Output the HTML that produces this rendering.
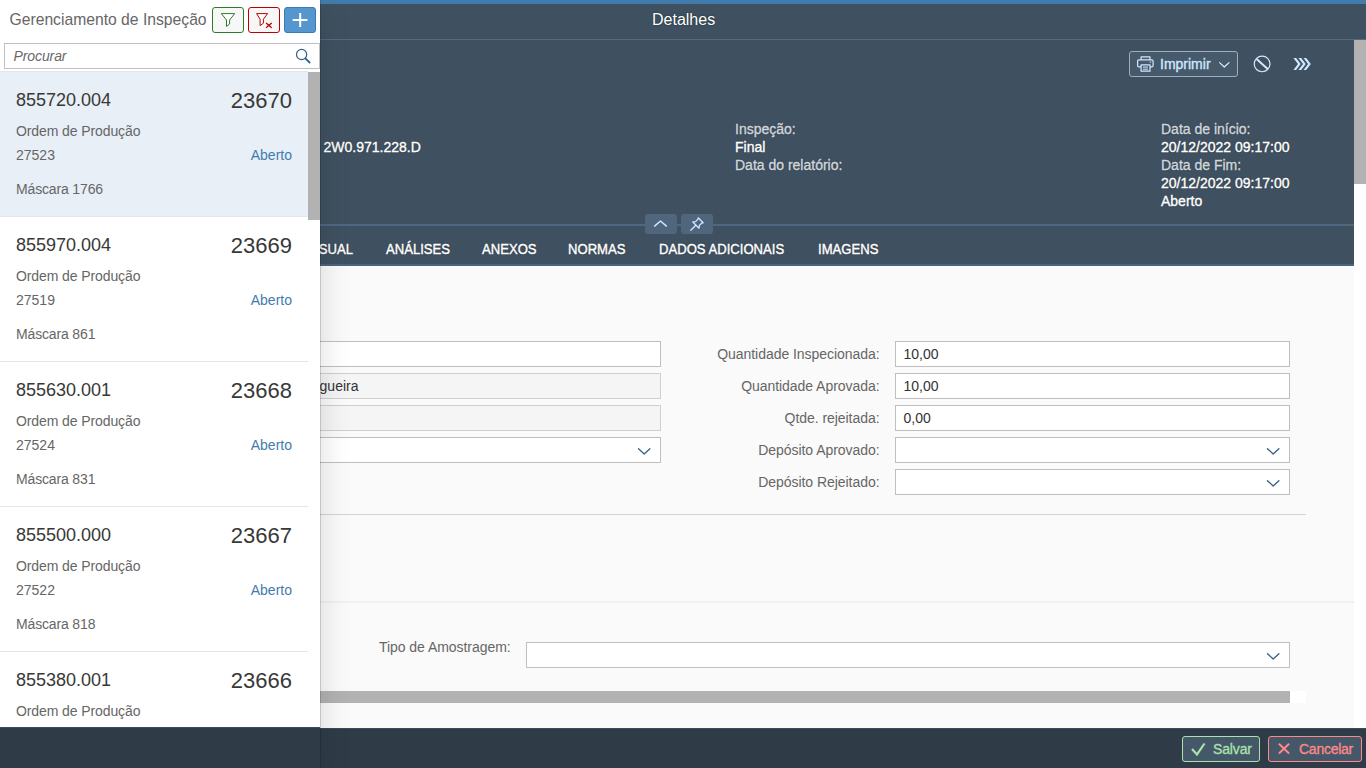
<!DOCTYPE html>
<html lang="pt-BR">
<head>
<meta charset="utf-8">
<title>Gerenciamento de Inspeção</title>
<style>
*{box-sizing:border-box;margin:0;padding:0}
html,body{width:1366px;height:768px;overflow:hidden;background:#fafafa}
body{font-family:"Liberation Sans",Arial,sans-serif;font-size:14px;color:#333;position:relative}
.t{position:absolute;white-space:nowrap;line-height:1}
svg{position:absolute;overflow:visible}

/* ---------- detail page ---------- */
#detail{position:absolute;left:0;top:0;width:1366px;height:768px;background:#fafafa;overflow:hidden}
#topbar{position:absolute;left:0;top:0;width:1366px;height:4px;background:#427cac}
#dhead{position:absolute;left:0;top:4px;width:1366px;height:36px;background:#3f5161;border-bottom:1px solid #536b80}
#ohead{position:absolute;left:0;top:40px;width:1354px;height:184px;background:#3f5161}
#oline{position:absolute;left:0;top:224px;width:1354px;height:2px;background:#4f6880}
#tabs{position:absolute;left:0;top:226px;width:1354px;height:38px;background:#3f5161}
#tabline{position:absolute;left:0;top:264px;width:1354px;height:2px;background:#4b637c}
#vtrack{position:absolute;left:1354px;top:40px;width:12px;height:688px;background:#fff}
#vthumb{position:absolute;left:1354px;top:40px;width:12px;height:144px;background:#b2b2b2}
.hl{color:#fff;font-size:14px;text-shadow:0 0 2px rgba(0,0,0,.4);-webkit-text-stroke:.35px #fff}
.hk{color:#d0d6dc;font-size:14px;text-shadow:0 0 2px rgba(0,0,0,.4);-webkit-text-stroke:.35px #d0d6dc}
.tab{color:#fff;font-size:14px;text-shadow:0 0 2px rgba(0,0,0,.4);top:242px;transform:scaleX(.935);transform-origin:0 0;-webkit-text-stroke:.4px #fff}
.tbtn{position:absolute;height:26px;border:1px solid #9bafc2;border-radius:3px;background:#465a6b}
.hbtn{position:absolute;top:214px;width:32px;height:20px;background:#4f667c;border-radius:3px}

/* form */
.inp{position:absolute;height:26px;border:1px solid #bfbfbf;background:#fff}
.inp.dis{background:#f5f5f5;border-color:#cfcfcf}
.lbl{color:#666;font-size:14px;letter-spacing:-.05px}
.val{color:#333;font-size:14px}
.hr{position:absolute;height:1px}

/* footer */
#foot{position:absolute;left:0;top:728px;width:1366px;height:40px;background:#2f3c48;box-shadow:inset 0 1px 0 #394b5c}
.fbtn{position:absolute;top:8px;height:26px;border-radius:3px;background:#44586a;border:1px solid}

/* ---------- master ---------- */
#master{position:absolute;left:0;top:0;width:320px;height:768px;background:#fff;box-shadow:0 0 0 1px rgba(0,0,0,.15),0 10px 30px 0 rgba(0,0,0,.15)}
#mfoot{position:absolute;left:0;top:727px;width:320px;height:41px;background:#2f3c48;border-top:1px solid #394b5c}
.mbtn{position:absolute;top:7px;width:32px;height:26px;border-radius:3px;border:1px solid;background:#f7f7f7}
#search{position:absolute;left:4px;top:43px;width:316px;height:26px;border:1px solid #bfbfbf;background:#fff}
#ltop{position:absolute;left:0;top:71px;width:308px;height:1px;background:#e5e5e5}
#mthumb{position:absolute;left:308px;top:72px;width:12px;height:148px;background:#b2b2b2}
.li{position:absolute;left:0;width:308px;height:145px;border-bottom:1px solid #e5e5e5}
.li.sel{background:#e8eff6}
.li .a{left:16px;top:19px;font-size:18px;color:#383838}
.li .n{right:16px;top:17.5px;font-size:22px;color:#383838}
.li .b{left:16px;top:52px;font-size:14px;letter-spacing:-.1px;color:#666}
.li .c{left:16px;top:76px;font-size:14px;color:#666}
.li .s{right:16px;top:76px;font-size:14px;color:#427cac}
.li .d{left:16px;top:109.5px;font-size:14px;letter-spacing:-.15px;color:#666}
</style>
</head>
<body>
<div id="detail">
  <div id="topbar"></div>
  <div id="dhead"><span class="t" id="dtitle" style="left:652px;top:8px;font-size:16px;color:#fff;text-shadow:0 0 2px rgba(0,0,0,.55)">Detalhes</span></div>
  <div id="ohead"></div>

  <!-- header toolbar -->
  <div class="tbtn" style="left:1129px;top:51px;width:109px"></div>
  <svg id="ic-print" style="left:1137px;top:56px" width="17" height="16" viewBox="0 0 17 16"><g fill="none" stroke="#d1e8ff" stroke-width="1.2" stroke-linejoin="round"><path d="M4.1 3.7V0.9h8.9v2.8"/><rect x="0.6" y="3.9" width="15.5" height="6.9" rx="1.3"/><rect x="4.1" y="8.9" width="8.9" height="6.3" fill="#465a6b"/><path d="M6 11.1h5M6 13.2h5" stroke-width="1"/><path d="M12.6 6.1h1.6" stroke-width="1"/></g></svg>
  <span class="t" id="tprint" style="left:1160px;top:57px;font-size:14px;color:#d1e8ff;-webkit-text-stroke:.35px #d1e8ff">Imprimir</span>
  <svg style="left:1219.2px;top:61.6px" width="10.6" height="6" viewBox="0 0 10.6 6"><path d="M0.6 0.6 L5.3 5 L10 0.6" fill="none" stroke="#d1e8ff" stroke-width="1.3" stroke-linecap="round" stroke-linejoin="round"/></svg>
  <svg id="ic-cancel" style="left:1253px;top:55px" width="18" height="18" viewBox="0 0 18 18"><g fill="none" stroke="#d1e8ff"><circle cx="9.1" cy="8.9" r="7.85" stroke-width="1.2"/><path d="M3.6 3.9 L14.7 14" stroke-width="2"/></g></svg>
  <svg id="ic-process" style="left:1293px;top:58px" width="18" height="12.1" viewBox="0 0 18 12.1"><g fill="#d1e8ff"><path d="M0.4 0h2.7l4.6 6.05-4.6 6.05h-2.7l4.6-6.05z"/><path d="M5.45 0h2.7l4.6 6.05-4.6 6.05h-2.7l4.6-6.05z"/><path d="M10.5 0h2.7l4.6 6.05-4.6 6.05h-2.7l4.6-6.05z"/></g></svg>

  <!-- header attributes -->
  <span class="t hl" style="left:323.5px;top:140px">2W0.971.228.D</span>
  <span class="t hk" style="left:735px;top:122px">Inspeção:</span>
  <span class="t hl" style="left:735px;top:140px">Final</span>
  <span class="t hk" style="left:735px;top:158px">Data do relatório:</span>
  <span class="t hk" style="left:1161px;top:122px">Data de início:</span>
  <span class="t hl" style="left:1161px;top:140px">20/12/2022 09:17:00</span>
  <span class="t hk" style="left:1161px;top:158px">Data de Fim:</span>
  <span class="t hl" style="left:1161px;top:176px">20/12/2022 09:17:00</span>
  <span class="t hl" style="left:1161px;top:194px">Aberto</span>

  <div id="oline"></div>
  <div id="tabs"></div>
  <span class="t tab" id="tab0" style="right:1012.7px;transform-origin:100% 0">INSPEÇÃO VISUAL</span>
  <span class="t tab" id="tab1" style="left:386px">ANÁLISES</span>
  <span class="t tab" id="tab2" style="left:482px">ANEXOS</span>
  <span class="t tab" id="tab3" style="left:568px">NORMAS</span>
  <span class="t tab" id="tab4" style="left:658.5px">DADOS ADICIONAIS</span>
  <span class="t tab" id="tab5" style="left:818px">IMAGENS</span>
  <div id="tabline"></div>
  <div class="hbtn" style="left:645px"></div>
  <div class="hbtn" style="left:681px"></div>
  <svg id="ic-up" style="left:654.4px;top:220.3px" width="13" height="7" viewBox="0 0 13 7"><path d="M0.6 6.1 L6.5 1 L12.4 6.1" fill="none" stroke="#d1e8ff" stroke-width="1.4" stroke-linecap="round" stroke-linejoin="round"/></svg>
  <svg id="ic-pin" style="left:690px;top:217px" width="14" height="14" viewBox="0 0 14 14"><g fill="none" stroke="#d1e8ff" stroke-width="1.3" stroke-linejoin="round" stroke-linecap="round"><path d="M8.2 0.8 L13.2 5.8 L11.6 6.2 L9.4 8.4 L9 11.2 L2.8 5 L5.6 4.6 L7.8 2.4 Z"/><path d="M5.8 8.2 L0.8 13.2"/></g></svg>

  <!-- form -->
  <div class="inp" style="left:100px;top:341px;width:561px"></div>
  <div class="inp dis" style="left:100px;top:373px;width:561px"></div>
  <span class="t val" style="right:1007.5px;top:379px">Mangueira</span>
  <div class="inp dis" style="left:100px;top:405px;width:561px"></div>
  <div class="inp" style="left:100px;top:437px;width:561px"></div>
  <svg style="left:637.7px;top:447.6px" width="12.4" height="7" viewBox="0 0 12.4 7"><path d="M0.5 0.7 L6.2 6 L11.9 0.7" fill="none" stroke="#346187" stroke-width="1.3" stroke-linecap="round" stroke-linejoin="round"/></svg>

  <span class="t lbl" style="right:486.5px;top:347px">Quantidade Inspecionada:</span>
  <span class="t lbl" style="right:486.5px;top:379px">Quantidade Aprovada:</span>
  <span class="t lbl" style="right:486.5px;top:411px">Qtde. rejeitada:</span>
  <span class="t lbl" style="right:486.5px;top:443px">Depósito Aprovado:</span>
  <span class="t lbl" style="right:486.5px;top:475px">Depósito Rejeitado:</span>
  <div class="inp" style="left:895px;top:341px;width:395px"></div>
  <div class="inp" style="left:895px;top:373px;width:395px"></div>
  <div class="inp" style="left:895px;top:405px;width:395px"></div>
  <div class="inp" style="left:895px;top:437px;width:395px"></div>
  <div class="inp" style="left:895px;top:469px;width:395px"></div>
  <span class="t val" style="left:903.5px;top:347px">10,00</span>
  <span class="t val" style="left:903.5px;top:379px">10,00</span>
  <span class="t val" style="left:903.5px;top:411px">0,00</span>
  <svg style="left:1266.7px;top:447.6px" width="12.4" height="7" viewBox="0 0 12.4 7"><path d="M0.5 0.7 L6.2 6 L11.9 0.7" fill="none" stroke="#346187" stroke-width="1.3" stroke-linecap="round" stroke-linejoin="round"/></svg>
  <svg style="left:1266.7px;top:479.6px" width="12.4" height="7" viewBox="0 0 12.4 7"><path d="M0.5 0.7 L6.2 6 L11.9 0.7" fill="none" stroke="#346187" stroke-width="1.3" stroke-linecap="round" stroke-linejoin="round"/></svg>

  <div class="hr" style="left:0;top:514px;width:1306px;background:#d4d4d4"></div>
  <div class="hr" style="left:0;top:601px;width:1354px;height:2px;background:#f0f0f0"></div>

  <span class="t lbl" style="left:379px;top:640px">Tipo de Amostragem:</span>
  <div class="inp" style="left:526px;top:642px;width:764px"></div>
  <svg style="left:1266.7px;top:652.6px" width="12.4" height="7" viewBox="0 0 12.4 7"><path d="M0.5 0.7 L6.2 6 L11.9 0.7" fill="none" stroke="#346187" stroke-width="1.3" stroke-linecap="round" stroke-linejoin="round"/></svg>
  <div style="position:absolute;left:0;top:691px;width:1306px;height:12px;background:#fff"></div>
  <div style="position:absolute;left:0;top:691px;width:1290px;height:12px;background:#b2b2b2"></div>

  <div id="vtrack"></div><div id="vthumb"></div>
  <div id="foot">
    <div class="fbtn" style="left:1182px;width:78px;border-color:#abe2ab"></div>
    <div class="fbtn" style="left:1268px;width:94px;border-color:#ff8888"></div>
    <svg id="ic-ok" style="left:1191px;top:14px" width="14" height="13" viewBox="0 0 14 13"><path d="M1 7 L6 12.4 L13.5 1.5" fill="none" stroke="#abe2ab" stroke-width="2.2" stroke-linejoin="miter"/></svg>
    <span class="t" id="tsave" style="left:1213px;top:14px;font-size:14px;color:#abe2ab;letter-spacing:-.15px;-webkit-text-stroke:.3px #abe2ab">Salvar</span>
    <svg id="ic-x" style="left:1278.3px;top:14.8px" width="12" height="11.4" viewBox="0 0 12 11.4"><path d="M0.9 0.8 L11.1 10.6 M11.1 0.8 L0.9 10.6" fill="none" stroke="#ff8888" stroke-width="2"/></svg>
    <span class="t" id="tcancel" style="left:1299px;top:14px;font-size:14px;color:#ff8888;letter-spacing:-.25px;-webkit-text-stroke:.3px #ff8888">Cancelar</span>
  </div>
</div>

<div id="master">
  <span class="t" id="mtitle" style="left:9.5px;top:11.5px;font-size:15.7px;color:#666">Gerenciamento de Inspeção</span>
  <div class="mbtn" style="left:212px;border-color:#2b7d2b"></div>
  <div class="mbtn" style="left:248px;border-color:#bb0000"></div>
  <div class="mbtn" style="left:284px;border-color:#367db8;background:#5496cd"></div>
  <svg id="ic-f1" style="left:220px;top:13px" width="16" height="14" viewBox="0 0 16 14"><path d="M1.3 0.6 H14.7 L9.6 7 V11 L6.5 13.4 V7 Z" fill="#fff" stroke="#2b7d2b" stroke-width="1" stroke-linejoin="round"/></svg>
  <svg id="ic-f2" style="left:256px;top:13px" width="17" height="15" viewBox="0 0 17 15"><path d="M0.6 0.6 H11.6 L7.4 6.2 V10.2 L4.1 12.6 V6.2 Z" fill="#fff" stroke="#bb0000" stroke-width="1" stroke-linejoin="round"/><path d="M10.1 9.9 L15.7 14.7 M15.7 9.9 L10.1 14.7" stroke="#bb0000" stroke-width="1.3" fill="none"/></svg>
  <svg id="ic-plus" style="left:293px;top:13px" width="14" height="14" viewBox="0 0 14 14"><path d="M7.2 0 V14.1 M-0.3 7.1 H14.4" stroke="#fff" stroke-width="2" fill="none"/></svg>
  <div id="search"></div>
  <span class="t" id="tsearch" style="left:13.5px;top:49px;font-size:14px;font-style:italic;color:#6a6a6a;letter-spacing:-.1px">Procurar</span>
  <svg id="ic-search" style="left:295px;top:48px" width="16" height="16" viewBox="0 0 16 16"><g fill="none" stroke="#346187" stroke-linecap="round"><circle cx="6.6" cy="6.5" r="5.1" stroke-width="1.2"/><path d="M10.4 10.3 L14.6 14.5" stroke-width="1.8"/></g></svg>
  <div id="ltop"></div>
  <div class="li sel" style="top:72px">
    <span class="t a">855720.004</span><span class="t n">23670</span>
    <span class="t b">Ordem de Produção</span>
    <span class="t c">27523</span><span class="t s">Aberto</span>
    <span class="t d">Máscara 1766</span>
  </div>
  <div class="li" style="top:217px">
    <span class="t a">855970.004</span><span class="t n">23669</span>
    <span class="t b">Ordem de Produção</span>
    <span class="t c">27519</span><span class="t s">Aberto</span>
    <span class="t d">Máscara 861</span>
  </div>
  <div class="li" style="top:362px">
    <span class="t a">855630.001</span><span class="t n">23668</span>
    <span class="t b">Ordem de Produção</span>
    <span class="t c">27524</span><span class="t s">Aberto</span>
    <span class="t d">Máscara 831</span>
  </div>
  <div class="li" style="top:507px">
    <span class="t a">855500.000</span><span class="t n">23667</span>
    <span class="t b">Ordem de Produção</span>
    <span class="t c">27522</span><span class="t s">Aberto</span>
    <span class="t d">Máscara 818</span>
  </div>
  <div class="li" style="top:652px">
    <span class="t a">855380.001</span><span class="t n">23666</span>
    <span class="t b">Ordem de Produção</span>
    <span class="t c">27520</span><span class="t s">Aberto</span>
    <span class="t d">Máscara 805</span>
  </div>
  <div id="mthumb"></div>
  <div id="mfoot"></div>
</div>
</body>
</html>
